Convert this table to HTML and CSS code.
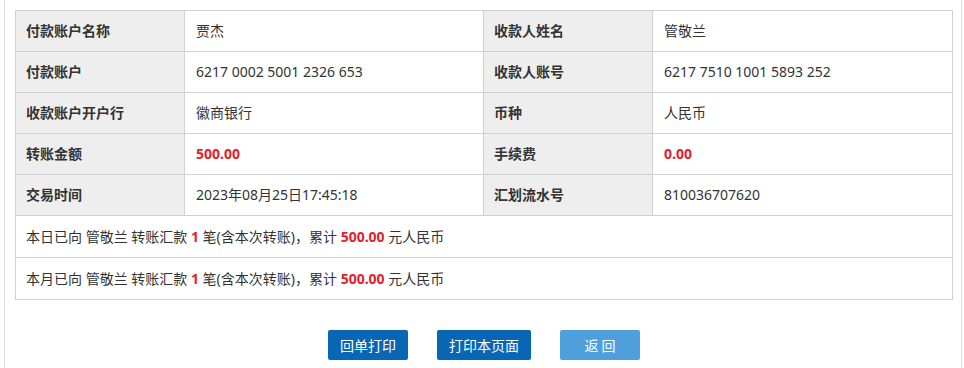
FILE: index.html
```html
<!DOCTYPE html>
<html lang="zh-CN">
<head>
<meta charset="utf-8">
<title>转账详情</title>
<link rel="stylesheet" href="styles.css">
</head>
<body>
<div class="page">
  <table class="detail">
    <colgroup>
      <col class="c-label">
      <col class="c-value">
      <col class="c-label">
      <col class="c-value-last">
    </colgroup>
    <tbody>
      <tr>
        <th>付款账户名称</th><td>贾杰</td>
        <th>收款人姓名</th><td>管敬兰</td>
      </tr>
      <tr>
        <th>付款账户</th><td>6217 0002 5001 2326 653</td>
        <th>收款人账号</th><td>6217 7510 1001 5893 252</td>
      </tr>
      <tr>
        <th>收款账户开户行</th><td>徽商银行</td>
        <th>币种</th><td>人民币</td>
      </tr>
      <tr>
        <th>转账金额</th><td><span class="amount">500.00</span></td>
        <th>手续费</th><td><span class="amount">0.00</span></td>
      </tr>
      <tr>
        <th>交易时间</th><td>2023年08月25日17:45:18</td>
        <th>汇划流水号</th><td>810036707620</td>
      </tr>
      <tr class="note">
        <td colspan="4">本日已向 管敬兰 转账汇款 <span class="amount">1</span> 笔(含本次转账)，累计 <span class="amount">500.00</span> 元人民币</td>
      </tr>
      <tr class="note">
        <td colspan="4">本月已向 管敬兰 转账汇款 <span class="amount">1</span> 笔(含本次转账)，累计 <span class="amount">500.00</span> 元人民币</td>
      </tr>
    </tbody>
  </table>
  <div class="actions">
    <button class="btn btn-primary" type="button">回单打印</button>
    <button class="btn btn-primary" type="button">打印本页面</button>
    <button class="btn btn-light" type="button">返 回</button>
  </div>
</div>
</body>
</html>
```
FILE: styles.css
```css
html, body {
  margin: 0;
  padding: 0;
  background: #fff;
}

body {
  font-family: "Noto Sans", "Noto Sans CJK SC", sans-serif;
  font-size: 14px;
  color: #333;
}

.page {
  box-sizing: border-box;
  width: 958px;
  min-height: 368px;
  margin-left: 4px;
  padding: 10px 8px 0 10px;
  border-left: 1px solid #ddd;
  border-right: 1px solid #ddd;
}

.detail {
  width: 938px;
  table-layout: fixed;
  border-collapse: collapse;
  border: 1px solid #d0d0d0;
}

.c-label { width: 169px; }
.c-value { width: 299px; }

.detail th,
.detail td {
  height: 40px;
  padding: 0 10px 0 11px;
  border: 1px solid #d0d0d0;
  text-align: left;
  vertical-align: middle;
  line-height: 20px;
  white-space: nowrap;
}

.detail th {
  padding-left: 10px;
  background: #eee;
  font-weight: bold;
}

.detail .note td {
  height: 41px;
  padding-left: 10px;
  font-size: 14px;
}

.amount {
  color: #e0222b;
  font-weight: bold;
}

.actions {
  display: flex;
  justify-content: center;
  gap: 29px;
  padding-top: 30px;
}

.btn {
  height: 30px;
  min-width: 80px;
  padding: 0 12px;
  border: 0;
  border-radius: 2px;
  font-family: "Noto Sans CJK SC", sans-serif;
  font-size: 14px;
  color: #fff;
  cursor: pointer;
}

.btn-primary { background: #0866b4; }
.btn-light { background: #4f9fdc; }
```
